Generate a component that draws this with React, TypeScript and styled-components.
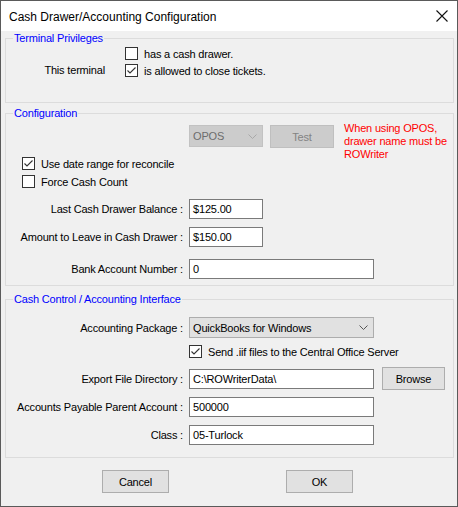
import React from "react";
import styled, { createGlobalStyle } from "styled-components";

const GlobalStyle = createGlobalStyle`
  html, body {
    margin: 0;
    padding: 0;
    background: #ffffff;
  }
  * {
    box-sizing: border-box;
  }
`;

function Check({ checked }: { checked?: boolean }) {
  return (
    <Box>
      {checked && (
        <svg width="11" height="11" viewBox="0 0 11 11">
          <polyline
            points="1.5,5.5 4,8 9.5,2.5"
            fill="none"
            stroke="#333"
            strokeWidth="1.1"
          />
        </svg>
      )}
    </Box>
  );
}

function Chevron({ color }: { color: string }) {
  return (
    <svg width="9" height="5" viewBox="0 0 9 5">
      <polyline points="0.5,0.5 4.5,4.5 8.5,0.5" fill="none" stroke={color} strokeWidth="1" />
    </svg>
  );
}

export default function App() {
  return (
    <Window>
      <GlobalStyle />
      <TitleBar>
        <Title>Cash Drawer/Accounting Configuration</Title>
        <svg width="12" height="12" viewBox="0 0 12 12">
          <path d="M0.5 0.5 L11.5 11.5 M11.5 0.5 L0.5 11.5" stroke="#111" strokeWidth="1.1" />
        </svg>
      </TitleBar>
      <Body>
        <Group $top={7} $height={65}>
          <Legend>Terminal Privileges</Legend>
          <PrivRow>
            <PrivLabel>This terminal</PrivLabel>
            <PrivChecks>
              <CheckRow>
                <Check />
                <span>has a cash drawer.</span>
              </CheckRow>
              <CheckRow>
                <Check checked />
                <span>is allowed to close tickets.</span>
              </CheckRow>
            </PrivChecks>
          </PrivRow>
        </Group>

        <Group $top={10} $height={173}>
          <Legend>Configuration</Legend>
          <DeviceRow>
            <Combo $width={74} $disabled>
              <span>OPOS</span>
              <Chevron color="#a8a8a8" />
            </Combo>
            <Button $width={64} $disabled>
              Test
            </Button>
            <Warning>
              When using OPOS,
              <br />
              drawer name must be
              <br />
              ROWriter
            </Warning>
          </DeviceRow>
          <OptionRow $top={-4}>
            <Check checked />
            <span>Use date range for reconcile</span>
          </OptionRow>
          <OptionRow $top={5}>
            <Check />
            <span>Force Cash Count</span>
          </OptionRow>
          <FieldRow $top={11}>
            <Label>Last Cash Drawer Balance :</Label>
            <TextBox $width={74}>$125.00</TextBox>
          </FieldRow>
          <FieldRow $top={8}>
            <Label>Amount to Leave in Cash Drawer :</Label>
            <TextBox $width={74}>$150.00</TextBox>
          </FieldRow>
          <FieldRow $top={12}>
            <Label>Bank Account Number :</Label>
            <TextBox $width={185}>0</TextBox>
          </FieldRow>
        </Group>

        <Group $top={13} $height={159}>
          <Legend>Cash Control / Accounting Interface</Legend>
          <FieldRow $top={17}>
            <Label>Accounting Package :</Label>
            <Combo $width={185}>
              <span>QuickBooks for Windows</span>
              <Chevron color="#555" />
            </Combo>
          </FieldRow>
          <FieldRow $top={7}>
            <Label />
            <CheckRow>
              <Check checked />
              <span>Send .iif files to the Central Office Server</span>
            </CheckRow>
          </FieldRow>
          <FieldRow $top={9}>
            <Label>Export File Directory :</Label>
            <TextBox $width={185}>C:\ROWriterData\</TextBox>
            <Button $width={63} $gap={8}>
              Browse
            </Button>
          </FieldRow>
          <FieldRow $top={7}>
            <Label>Accounts Payable Parent Account :</Label>
            <TextBox $width={185}>500000</TextBox>
          </FieldRow>
          <FieldRow $top={8}>
            <Label>Class :</Label>
            <TextBox $width={185}>05-Turlock</TextBox>
          </FieldRow>
        </Group>

        <Footer>
          <Button $width={67}>Cancel</Button>
          <Button $width={67}>OK</Button>
        </Footer>
      </Body>
    </Window>
  );
}

const Window = styled.div`
  width: 458px;
  height: 507px;
  border: 1px solid #5a5a5a;
  background: #f0f0f0;
  display: flex;
  flex-direction: column;
  font-family: "Liberation Sans", Arial, sans-serif;
  font-size: 11px;
  letter-spacing: -0.18px;
  color: #000;
`;

const TitleBar = styled.div`
  height: 30px;
  background: #ffffff;
  display: flex;
  align-items: center;
  justify-content: space-between;
  padding: 0 9px 0 8px;
  flex-shrink: 0;
`;

const Title = styled.div`
  font-size: 12px;
  letter-spacing: 0;
  padding-top: 1px;
`;

const Body = styled.div`
  flex: 1;
  padding: 0 3px 0 4px;
  display: flex;
  flex-direction: column;
`;

const Group = styled.div<{ $top: number; $height: number }>`
  position: relative;
  margin-top: ${(p) => p.$top}px;
  height: ${(p) => p.$height}px;
  border: 1px solid #dcdcdc;
  display: flex;
  flex-direction: column;
`;

const Legend = styled.div`
  position: absolute;
  top: -7px;
  left: 7px;
  padding: 0 1px;
  background: #f0f0f0;
  color: #0000ff;
  line-height: 13px;
`;

const PrivRow = styled.div`
  display: flex;
  align-items: flex-end;
  margin-top: 8px;
`;

const PrivLabel = styled.div`
  width: 99px;
  text-align: right;
  line-height: 13px;
`;

const PrivChecks = styled.div`
  margin-left: 20px;
  display: flex;
  flex-direction: column;
  gap: 4px;
`;

const CheckRow = styled.div`
  display: flex;
  align-items: center;
  gap: 6px;
  height: 13px;
  white-space: nowrap;
`;

const Box = styled.div`
  width: 13px;
  height: 13px;
  border: 1px solid #333;
  background: #fff;
  flex-shrink: 0;
  display: flex;
  align-items: center;
  justify-content: center;
`;

const DeviceRow = styled.div`
  display: flex;
  align-items: flex-start;
  margin-top: 8px;
  padding-left: 183px;
`;

const Combo = styled.div<{ $width: number; $disabled?: boolean }>`
  width: ${(p) => p.$width}px;
  height: ${(p) => (p.$disabled ? 22 : 21)}px;
  margin-top: ${(p) => (p.$disabled ? 3 : 0)}px;
  border: 1px solid ${(p) => (p.$disabled ? "#c2c2c2" : "#adadad")};
  background: ${(p) => (p.$disabled ? "#cccccc" : "#e1e1e1")};
  color: ${(p) => (p.$disabled ? "#6d6d6d" : "#000")};
  display: flex;
  align-items: center;
  justify-content: space-between;
  padding: 0 5px 0 3px;
  flex-shrink: 0;
`;

const Button = styled.div<{ $width: number; $disabled?: boolean; $gap?: number }>`
  width: ${(p) => p.$width}px;
  height: 23px;
  margin-left: ${(p) => p.$gap ?? 0}px;
  margin-top: ${(p) => (p.$disabled ? 3 : 0)}px;
  border: 1px solid ${(p) => (p.$disabled ? "#bfbfbf" : "#adadad")};
  background: ${(p) => (p.$disabled ? "#cccccc" : "#e1e1e1")};
  color: ${(p) => (p.$disabled ? "#838383" : "#000")};
  display: flex;
  align-items: center;
  justify-content: center;
  flex-shrink: 0;
  ${(p) => (p.$disabled ? "margin-left: 7px;" : "")}
`;

const Warning = styled.div`
  margin-left: 10px;
  color: #ff0000;
  line-height: 13px;
  white-space: nowrap;
`;

const OptionRow = styled(CheckRow)<{ $top: number }>`
  margin-top: ${(p) => p.$top}px;
  padding-left: 16px;
`;

const FieldRow = styled.div<{ $top: number }>`
  display: flex;
  align-items: center;
  margin-top: ${(p) => p.$top}px;
`;

const Label = styled.div`
  width: 177px;
  margin-right: 6px;
  text-align: right;
  white-space: nowrap;
  flex-shrink: 0;
`;

const TextBox = styled.div<{ $width: number }>`
  width: ${(p) => p.$width}px;
  height: 20px;
  border: 1px solid #7a7a7a;
  background: #ffffff;
  padding: 0 3px;
  display: flex;
  align-items: center;
  flex-shrink: 0;
  white-space: nowrap;
`;

const Footer = styled.div`
  margin-top: 12px;
  display: flex;
  gap: 117px;
  padding-left: 97px;
`;
